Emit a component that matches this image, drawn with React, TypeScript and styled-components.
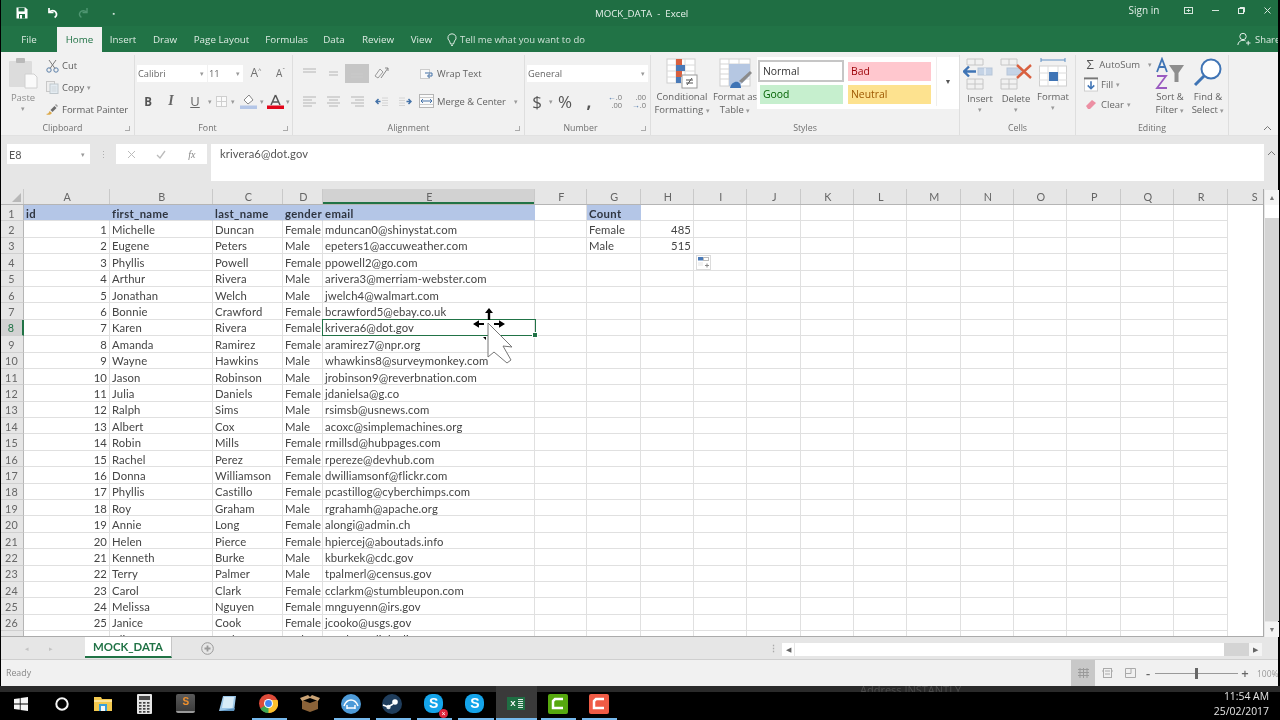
import React from "react";
import styled, { createGlobalStyle } from "styled-components";

const Global = createGlobalStyle`
  html, body { margin: 0; padding: 0; background: #000; }
  #root { width: 1280px; height: 720px; overflow: hidden; }
`;

const UI = `"Open Sans", "Noto Sans", sans-serif`;
const CELL = `Lato, "Open Sans", sans-serif`;

const Page = styled.div`
  width: 1280px; height: 720px; display: flex; flex-direction: column; overflow: hidden;
  background: #000; font-family: ${UI}; filter: blur(0.4px);
`;
const Window = styled.div`
  height: 686px; margin: 0 2px 0 1px; display: flex; flex-direction: column; background: #e6e6e6; position: relative;
`;

/* title bar */
const TitleBar = styled.div`
  height: 26px; background: #1f6e43; display: flex; align-items: center; color: #fff; position: relative; flex: none;
`;
const QuickAccess = styled.div`display: flex; align-items: center; padding-left: 6px;`;
const QuickBtn = styled.div`width: 30.5px; display: flex; justify-content: center;`;
const TitleText = styled.div`
  position: absolute; left: 594px; top: 7px; font-size: 9.7px; line-height: 14px; color: #e8f1ec; white-space: pre;
`;
const WinControls = styled.div`margin-left: auto; margin-right: -3px; display: flex; align-items: center; height: 20px; align-self: flex-start; font-size: 10px; color: #e3eee8;`;
const SignIn = styled.span`margin-right: 16px;`;
const WinBtn = styled.div`width: 26.4px; display: flex; justify-content: center;`;

/* tabs */
const TabRow = styled.div`
  height: 26px; background: #217346; display: flex; align-items: flex-end; flex: none; font-size: 9.8px; color: #dcebe2;
`;
const Tab = styled.div<{ $w: number; $active?: boolean }>`
  width: ${(p) => p.$w}px; height: ${(p) => (p.$active ? 25 : 26)}px; display: flex; align-items: center; justify-content: center;
  padding-top: ${(p) => (p.$active ? 0 : 1)}px; box-sizing: border-box;
  background: ${(p) => (p.$active ? "#f1f1f1" : "transparent")}; color: ${(p) => (p.$active ? "#217346" : "inherit")};
`;
const TellMe = styled.div`display: flex; align-items: center; height: 26px; padding-top: 1px; box-sizing: border-box; gap: 3px; margin-left: 8px; color: #cfe2d7; font-size: 9.5px;`;
const ShareBox = styled.div`margin-left: auto; display: flex; align-items: center; height: 26px; gap: 4px; width: 41px; flex: none; overflow: hidden; white-space: nowrap; font-size: 9.4px;
  svg { flex: none; }
`;

/* ribbon */
const Ribbon = styled.div`height: 83px; background: #f1f1f1; display: flex; flex: none; color: #595959; font-size: 9.5px;`;
const Group = styled.div<{ $w: number }>`
  width: ${(p) => p.$w}px; flex: none; display: flex; flex-direction: column; border-right: 1px solid #dedede; box-sizing: border-box;
  margin-top: 3px;
`;
const GroupBody = styled.div<{ $pl?: number }>`height: 65px; flex: none; display: flex; padding-left: ${(p) => p.$pl ?? 0}px;`;
const GroupColumn = styled.div`height: 65px; flex: none; display: flex; flex-direction: column; padding-top: 9px; box-sizing: border-box;`;
const GroupLabel = styled.div<{ $pr?: number }>`
  height: 12px; flex: none; line-height: 12px; margin-top: 2px; text-align: center; position: relative; color: #707070; font-size: 8.8px;
  padding-right: ${(p) => p.$pr ?? 0}px;
`;
const Launcher = styled.span`
  position: absolute; right: 4px; top: 4px; width: 4px; height: 4px; border-right: 1px solid #aaa; border-bottom: 1px solid #aaa; 
`;
const PasteBtn = styled.div`width: 44px; display: flex; flex-direction: column; align-items: center; padding-top: 2px; color: #8e8e8e;`;
const TinyCaret = styled.span<{ $c?: string }>`font-size: 7px; line-height: 9px; color: ${(p) => p.$c ?? "#999"};`;
const ClipList = styled.div`display: flex; flex-direction: column;`;
const ClipRow = styled.div`height: 22px; display: flex; align-items: center; gap: 3px; white-space: nowrap; color: #5c5c5c;`;
const ClipIcon = styled.div`width: 14px; display: flex; justify-content: center;`;
const ToolRow = styled.div<{ $pl?: number; $mt?: number }>`
  display: flex; align-items: center; height: 18px; padding-left: ${(p) => p.$pl ?? 0}px; margin-top: ${(p) => p.$mt ?? 0}px; white-space: nowrap;
`;
const Slot = styled.div<{ $w: number; $on?: boolean }>`
  width: ${(p) => p.$w}px; height: 19px; flex: none; display: flex; align-items: center; justify-content: center;
  background: ${(p) => (p.$on ? "#c6c6c6" : "transparent")}; color: #707070;
`;
const GrowA = styled.span<{ $s: number }>`font-size: ${(p) => p.$s}px; line-height: 12px;`;
const Mini = styled.span`font-size: 6px; line-height: 6px; align-self: flex-start; margin-top: 3px;`;
const BoldB = styled.span`font-size: 11.5px; font-weight: 700; color: #555;`;
const ItalicI = styled.span`font-family: "Liberation Serif", serif; font-size: 14px; font-weight: 700; font-style: italic; color: #666;`;
const UnderU = styled.span`font-size: 13px; text-decoration: underline; color: #666;`;
const BigSign = styled.span<{ $s?: number; $bold?: boolean }>`font-size: ${(p) => p.$s ?? 17}px; line-height: 19px; font-weight: ${(p) => (p.$bold ? 700 : 400)}; color: #555;`;
const SelectBox = styled.div<{ $w: number }>`
  width: ${(p) => p.$w}px; height: 17px; background: #fff; display: flex; align-items: center; flex: none; box-sizing: border-box;
  font-size: 9.3px; color: #666; padding-right: 3px; margin-right: 1px;
`;
const SelectText = styled.span`flex: 1; padding-left: 1px;`;
const TextTool = styled.div<{ $ml?: number }>`display: flex; align-items: center; gap: 3px; margin-left: ${(p) => p.$ml ?? 0}px; color: #626262; font-size: 9.4px;`;
const LargeBtn = styled.div<{ $w: number }>`
  width: ${(p) => p.$w}px; flex: none; display: flex; flex-direction: column; align-items: center; padding-top: 2px; text-align: center; line-height: 13px; color: #626262; white-space: nowrap;
`;
const LargeIcon = styled.div`height: 33px; display: flex; align-items: center; justify-content: center;`;
const LargeText = styled.div``;
const LowLabel = styled.div`padding-top: 2px; line-height: 13px;`;
const Gallery = styled.div`
  width: 202px; height: 52px; margin-top: 2px; background: #fff; display: grid; grid-template-columns: 88px 88px 1fr; grid-template-rows: 23px 22px; padding: 3px 0 0 1px; box-sizing: border-box; position: relative;
`;
const StyleChip = styled.div<{ $bg: string; $fg: string; $bd?: boolean; $low?: boolean }>`
  background: ${(p) => p.$bg}; color: ${(p) => p.$fg}; display: flex; align-items: center; padding: 0 0 ${(p) => (p.$bd ? 0 : 1)}px 3px;
  margin: ${(p) => (p.$bd ? "0 2px 1px 0" : p.$low ? "2px 3px 1px 2px" : "2px 3px 2px 2px")};
  border: ${(p) => (p.$bd ? "2px solid #c6c6c6" : "none")};
  font-size: 10.4px; box-sizing: border-box;
`;
const GalleryScroll = styled.div`
  grid-row: 1 / span 2; grid-column: 3; border-left: 1px solid #eee; display: flex; align-items: center; justify-content: center; margin: -3px 0 -1px 2px; font-size: 7px; color: #555; 
`;
const EditList = styled.div`width: 68px; margin-top: -1px; padding-left: 8px; box-sizing: content-box; display: flex; flex-direction: column; flex: none;`;
const EditRow = styled.div`height: 20px; display: flex; align-items: center; gap: 3px; white-space: nowrap; color: #666;`;
const EditIcon = styled.div`width: 14px; display: flex; justify-content: center;`;
const SigmaGlyph = styled.span`font-size: 13px; color: #555;`;
const CollapseArea = styled.div`flex: 1; display: flex; align-items: flex-end; justify-content: flex-end; padding: 0 6px 4px 0;`;

/* formula bar */
const FormulaBar = styled.div`
  height: 54px; flex: none; display: flex; align-items: flex-start; padding-top: 8px; box-sizing: border-box; background: #e6e6e6; color: #666;
  border-top: 1px solid #e1e1e1;
`;
const NameBox = styled.div`
  width: 83px; height: 20px; margin-left: 6px; background: #fff; display: flex; align-items: center; justify-content: space-between; padding: 0 5px 0 2px; box-sizing: border-box; font-family: ${CELL}; font-size: 10.8px; color: #555;
`;
const Grip = styled.div`width: 26px; display: flex; justify-content: center; align-items: center; height: 20px; color: #aaa; font-size: 9px;`;
const FxBox = styled.div`width: 91px; height: 20px; background: #fff; display: flex; align-items: center;`;
const FxBtn = styled.div`flex: 1; display: flex; justify-content: center; align-items: center; color: #888; font-family: "Liberation Serif", serif; font-style: italic; font-size: 10px;`;
const FormulaInput = styled.div`
  width: 1053px; height: 37px; margin-left: 4px; background: #fff; box-sizing: border-box; padding: 2px 0 0 9px; font-family: ${CELL}; font-size: 11.2px; letter-spacing: .12px; line-height: 15px; color: #555;
`;
const FormulaEnd = styled.div`flex: 1; display: flex; justify-content: center; padding-top: 6px;`;

/* sheet */
const COLS = [23, 86, 103, 70, 40, 212, 52, 54, 53, 53, 54, 53, 53, 54, 53, 53, 54, 53, 54, 53];
const TEMPLATE = COLS.map((c) => `${c}px`).join(" ");
const Sheet = styled.div`height: 448px; flex: none; display: flex; position: relative; background: #e6e6e6;`;
const GridArea = styled.div`width: 1263px; flex: none; display: flex; flex-direction: column; overflow: hidden; background: #fff; border-right: 1px solid #ababab; border-bottom: 1px solid #ababab; box-sizing: border-box;`;
const HeaderRow = styled.div`
  height: 16px; flex: none; display: grid; grid-template-columns: ${TEMPLATE}; background: #e6e6e6; box-sizing: border-box; border-bottom: 1px solid #b5b5b5;
`;
const Corner = styled.div`position: relative; border-right: 1px solid #c9c9c9;`;
const CornerMark = styled.span`
  position: absolute; right: 2px; bottom: 2px; width: 0; height: 0; border-left: 9px solid transparent; border-bottom: 9px solid #b8b8b8;
`;
const ColHead = styled.div<{ $sel?: boolean }>`
  display: flex; align-items: center; justify-content: center; font-family: ${CELL}; font-size: 10.8px; color: #666;
  border-right: 1px solid #c9c9c9; box-sizing: border-box; padding-left: 1.5px;
  background: ${(p) => (p.$sel ? "#d2d2d2" : "transparent")};
  box-shadow: ${(p) => (p.$sel ? "inset 0 -2px 0 #217346" : "none")};
`;
const Row = styled.div`
  height: 16.4px; flex: none; display: grid; grid-template-columns: ${TEMPLATE};
  font-family: ${CELL}; font-size: 11.3px; letter-spacing: .12px; color: #444;
`;
const RowHead = styled.div<{ $sel?: boolean }>`
  background: ${(p) => (p.$sel ? "#d2d2d2" : "#e6e6e6")}; color: ${(p) => (p.$sel ? "#217346" : "#666")}; display: flex; align-items: center; justify-content: center;
  padding: 1px 1px 0 0; box-sizing: border-box; border-bottom: 1px solid #cfcfcf; 
  border-right: ${(p) => (p.$sel ? "2px solid #217346" : "1px solid #b5b5b5")};
  font-size: 10.8px;
`;
const Cell = styled.div<{ $right?: boolean; $fill?: boolean; $bold?: boolean; $noBorder?: boolean }>`
  position: relative; display: flex; align-items: center; box-sizing: border-box; padding: 1px 2px 0; white-space: nowrap; min-width: 0;
  justify-content: ${(p) => (p.$right ? "flex-end" : "flex-start")};
  border-right: 1px solid ${(p) => (p.$noBorder ? (p.$fill ? "#b4c6e7" : "transparent") : "#e0e0e0")};
  border-bottom: 1px solid #e0e0e0;
  background: ${(p) => (p.$fill ? "#b4c6e7" : "transparent")};
  font-weight: ${(p) => (p.$bold ? 700 : 400)};
  letter-spacing: ${(p) => (p.$bold ? ".35px" : "inherit")};
  color: ${(p) => (p.$bold ? "#2f3540" : "inherit")};
`;
const Selection = styled.span`
  position: absolute; left: -1px; top: -1px; right: -2px; bottom: -1px; border: 1.5px solid #217346; pointer-events: none; z-index: 2;
`;
const FillHandle = styled.span`
  position: absolute; right: -3px; bottom: -3px; width: 4px; height: 4px; background: #217346; border: 1px solid #fff; z-index: 3;
`;
const QuickAnalysis = styled.div`
  position: absolute; left: 695px; top: 66px; width: 15px; height: 15px; background: #fff; border: 1px solid #dcdcdc; box-sizing: border-box; display: flex; align-items: center; justify-content: center;
`;
const Pointer = styled.div`position: absolute; left: 468px; top: 117px; z-index: 5;`;
const ScrollRail = styled.div`width: 14px; margin-left: 1px; display: flex; flex-direction: column; flex: none;`;
const ScrollBtn = styled.div`height: 15px; background: #f4f4f4; flex: none; display: flex; align-items: center; justify-content: center; margin-top: 1px;`;
const ScrollThumb = styled.div`height: 13px; background: #fff; flex: none;`;
const ScrollTrack = styled.div`flex: 1; background: #d4d4d4;`;

/* sheet tabs */
const SheetBar = styled.div`
  height: 23px; flex: none; background: #e6e6e6; display: flex; align-items: flex-start; box-sizing: border-box; border-bottom: 1px solid #cfcfcf; color: #aaa;
`;
const NavArrows = styled.div`width: 84px; height: 22px; display: flex; align-items: center; padding-left: 14px; box-sizing: border-box; font-size: 7px; color: #c3c3c3;`;
const NavArrow = styled.span`width: 24px; text-align: center;`;
const SheetTab = styled.div`
  width: 87px; height: 21px; background: #fff; border-bottom: 2px solid #217346; box-sizing: border-box; display: flex; align-items: center; justify-content: center; color: #217346; font-family: ${CELL}; font-weight: 700; font-size: 11.4px;
  border-right: 1px solid #c6c6c6;
`;
const PlusBtn = styled.div`margin-left: 29px; height: 22px; display: flex; align-items: center;`;
const BarGrip = styled.div`margin-left: 555px; width: 13px; height: 22px; display: flex; align-items: center; color: #aaa; font-size: 9px; font-weight: 700;`;
const HScroll = styled.div`display: flex; align-items: center; height: 14px; margin-top: 5px; width: 480px; flex: none;`;
const HBtn = styled.div<{ $w?: number; $soft?: boolean }>`width: ${(p) => p.$w ?? 12}px; height: 13px; background: ${(p) => (p.$soft ? "#f4f4f4" : "#fff")}; display: flex; align-items: center; justify-content: center; flex: none;`;
const HTrack = styled.div`flex: 1; height: 13px; background: #fff; margin-left: 1px;`;
const HThumb = styled.div`width: 25px; height: 13px; background: #d4d4d4; flex: none;`;

/* status */
const StatusBar = styled.div`
  height: 26px; flex: none; background: #f1f1f1; display: flex; align-items: center; padding-left: 5px; font-size: 8.8px; color: #888;
`;
const StatusRight = styled.div`margin-left: auto; height: 26px; display: flex; align-items: center; white-space: nowrap;`;
const ViewBtn = styled.div<{ $on?: boolean; $w: number }>`
  width: ${(p) => p.$w}px; height: 26px; display: flex; align-items: center; justify-content: center; background: ${(p) => (p.$on ? "#c8c8c8" : "transparent")};
`;
const ZoomTrack = styled.div`width: 83px; height: 1px; background: #999; position: relative;`;
const ZoomThumb = styled.span`position: absolute; left: 40px; top: -5px; width: 3px; height: 11px; background: #666;`;
const ZoomSign = styled.span`width: 14px; text-align: center; color: #666; font-size: 13px; font-weight: 600; line-height: 12px;`;
const ZoomPct = styled.span`width: 21px; margin-left: 5px; color: #999; font-size: 8.5px; overflow: hidden;`;

/* taskbar */
const Taskbar = styled.div`height: 34px; flex: none; background: #000; display: flex; position: relative; color: #e8e8e8;`;
const TaskStrip = styled.div`
  position: absolute; left: 0; right: 0; top: 0; height: 6px; background: #2a2a2a; overflow: hidden; font-size: 11px; line-height: 8px; color: #4d4d4d; padding-left: 860px; white-space: pre;
`;
const TaskItem = styled.div<{ $open?: boolean; $active?: boolean }>`
  width: 41.3px; height: 34px; flex: none; display: flex; align-items: center; justify-content: center; position: relative; padding-top: 1px; box-sizing: border-box;
  background: ${(p) => (p.$active ? "#3a3a3a" : "transparent")}; z-index: 1;
  &::after {
    content: ""; position: absolute; left: ${(p) => (p.$active ? 0 : 4)}px; right: ${(p) => (p.$active ? 0 : 2)}px; bottom: 0; height: 2px;
    background: ${(p) => (p.$open ? "#76b9ed" : "transparent")};
  }
`;
const Clock = styled.div`
  margin-left: auto; padding: 3px 11px 0 0; text-align: right; font-size: 10.4px; line-height: 15px; z-index: 1; color: #e4e4e4;
`;

/* ---------- icons ---------- */
const Caret = () => <TinyCaret>▾</TinyCaret>;

const SaveIcon = () => (
  <svg width="12" height="12" viewBox="0 0 12 12"><path d="M0.5 0.5h9l2 2v9h-11z" fill="#fff" /><rect x="2.5" y="1" width="6" height="3.4" fill="#1f6e43" /><rect x="3" y="7" width="6" height="4.5" fill="#1f6e43" /><rect x="4" y="8" width="2" height="3.5" fill="#fff" /></svg>
);
const UndoIcon = ({ c = "#fff" }: { c?: string }) => (
  <svg width="13" height="12" viewBox="0 0 13 12" fill="none" stroke={c} strokeWidth="1.7"><path d="M3 1v4.5h4.5" /><path d="M3.2 5.2c2-2 5.2-2 6.6 0 1.2 1.8.6 4-1.2 5.3" /></svg>
);
const RedoIcon = () => (
  <svg width="13" height="12" viewBox="0 0 13 12" fill="none" stroke="#4f9672" strokeWidth="1.4"><path d="M10 1v4.5H5.5" /><path d="M9.8 5.2c-2-2-5.2-2-6.6 0-1.2 1.8-.6 4 1.2 5.3" /></svg>
);
const BoxIcon = () => <svg width="9" height="7" viewBox="0 0 9 7" fill="none" stroke="#d5e6dc"><rect x=".5" y=".5" width="8" height="6" /><path d="M2.500 3.500h4M4.500 2v3" /></svg>;
const MinIcon = () => <svg width="7" height="7" viewBox="0 0 7 7" stroke="#d5e6dc"><path d="M0 3.500h7" /></svg>;
const RestoreIcon = () => <svg width="7" height="7" viewBox="0 0 7 7" fill="none" stroke="#e3eee8"><rect x=".5" y="1.500" width="5" height="5" /><path d="M2 1.500V.5h4.500V5h-1" /></svg>;
const CloseIcon = () => <svg width="7" height="7" viewBox="0 0 7 7" stroke="#d5e6dc"><path d="M.5.5l6 6M6.500.5l-6 6" /></svg>;
const Bulb = () => <svg width="10" height="13" viewBox="0 0 10 13" fill="none" stroke="#dcebe2"><path d="M5 .8a4 4 0 0 0-2.500 7.200L3.500 11h3l1-3A4 4 0 0 0 5 .8z" /><path d="M4 12.400h2" /></svg>;
const ShareIcon = () => <svg width="14" height="14" viewBox="0 0 14 14" fill="none" stroke="#e4efe9"><circle cx="6" cy="4.500" r="3.200" /><path d="M.8 13c.4-3 2.500-4.700 5.200-4.700 1 0 1.800.2 2.500.6M9 11h4.500M11.200 8.800v4.500" /></svg>;

const ClipboardIcon = () => (
  <svg width="30" height="34" viewBox="0 0 30 34"><rect x="1" y="4" width="23" height="26" rx="1" fill="#dcdcdc" /><rect x="8" y="1" width="9" height="5" rx="1" fill="#b9b9b9" /><path d="M17 17h9l3 3v11H17z" fill="#fafafa" stroke="#d0d0d0" /></svg>
);
const Scissors = () => <svg width="13" height="14" viewBox="0 0 13 14" fill="none" stroke="#7a7a7a"><circle cx="3" cy="11" r="2.200" stroke="#5b7fa8" /><circle cx="10" cy="11" r="2.200" stroke="#5b7fa8" /><path d="M3 1l6 8.500M10 1L4 9.500" /></svg>;
const CopyIcon = () => <svg width="13" height="13" viewBox="0 0 13 13"><rect x=".5" y=".5" width="8" height="10" fill="#eee" stroke="#c8c8c8" /><rect x="4" y="3" width="8" height="9.500" fill="#e4ecf2" stroke="#bfc7cc" /><path d="M5.500 6h5M5.500 8h5M5.500 10h5" stroke="#cfd5d9" /></svg>;
const Brush = () => <svg width="14" height="13" viewBox="0 0 14 13"><path d="M1 11c2 0 3-1 3.500-3L7 10c-1.500 2-4 2.500-6 1z" fill="#dca94a" /><path d="M5.500 7l4-4 2 2-4 4z" fill="#6b6b6b" /><path d="M10 2l1-1 2 2-1 1z" fill="#999" /></svg>;

const Lines = ({ rows, w = 13 }: { rows: number[][]; w?: number }) => (
  <svg width={w} height="12" viewBox={`0 0 ${w} 12`} stroke="#c8c8c8" strokeWidth="1.500">
    {rows.map((r, i) => <line key={i} x1={r[0]} x2={r[1]} y1={r[2]} y2={r[2]} />)}
  </svg>
);
const Orient = () => <svg width="17" height="14" viewBox="0 0 17 14" fill="none" stroke="#9a9a9a"><path d="M2 10l5-7 3 3-5 6z" /><path d="M8 12L15 2M12 2h3v3" stroke="#888" /></svg>;
const IndentIcon = ({ flip }: { flip?: boolean }) => (
  <svg width="13" height="11" viewBox="0 0 13 11" style={flip ? { transform: "scaleX(-1)" } : undefined}>
    <path d="M7 2h6M7 4.500h6M7 7h6M7 9.500h6" stroke="#d4d4d4" /><path d="M5.500 5.500H1M3.500 3L1 5.500 3.500 8" fill="none" stroke="#4472a8" strokeWidth="1.500" />
  </svg>
);
const WrapIcon = () => <svg width="14" height="11" viewBox="0 0 14 11"><rect x=".5" y="1.500" width="9" height="9" fill="#fafafa" stroke="#ccc" /><path d="M5 5h7v3H8M9.500 6l-2 2 2 2" fill="none" stroke="#4472a8" /></svg>;
const MergeIcon = () => <svg width="15" height="14" viewBox="0 0 15 14" fill="none"><rect x=".5" y=".5" width="14" height="13" fill="#fafafa" stroke="#b5b5b5" /><path d="M1 3.500h13M1 10.500h13" stroke="#ccc" /><path d="M2 7h11M4 5L2 7l2 2M11 5l2 2-2 2" stroke="#4472a8" /></svg>;
const Stack = styled.div`display: flex; flex-direction: column; align-items: flex-end; font-size: 7.5px; line-height: 8px; color: #777;`;
const StackLine = styled.span`display: flex; align-items: center; height: 8px;`;
const ArrowL = styled.span`color: #4472a8; font-weight: 700; font-size: 8px;`;
const IncDec = ({ inc }: { inc?: boolean }) => (
  <Stack>
    <StackLine>{inc ? <ArrowL>←</ArrowL> : null}{inc ? ".0" : ".00"}</StackLine>
    <StackLine>{inc ? ".00" : <><ArrowL>→</ArrowL>.0</>}</StackLine>
  </Stack>
);

const FillBucket = () => <svg width="17" height="15" viewBox="0 0 17 15"><path d="M4 6l5-5 4 5-5 4z" fill="#fff" stroke="#888" /><rect x="0" y="11.500" width="17" height="3.500" fill="#b4c6e7" /></svg>;
const ColorA = () => <svg width="17" height="15" viewBox="0 0 17 15"><path d="M8.500 1L4 11M8.500 1L13 11M5.500 8h6" stroke="#555" strokeWidth="1.500" fill="none" /><rect x="0" y="11.500" width="17" height="3.500" fill="#e2061a" /></svg>;
const BorderIcon = () => <svg width="11" height="11" viewBox="0 0 11 11" fill="#fafafa" stroke="#cfcfcf"><rect x=".5" y=".5" width="10" height="10" /><path d="M5.500 0v11M0 5.500h11" /></svg>;
const CondFormat = () => (
  <svg width="32" height="31" viewBox="0 0 32 31">
    <rect x="1" y="1" width="28" height="24" fill="#fff" stroke="#cfcfcf" />
    <path d="M1 7h28M1 13h28M1 19h28M10 1v24M19 1v24" stroke="#dadada" fill="none" />
    <rect x="10" y="1" width="6" height="6" fill="#d9603f" /><rect x="10" y="7" width="9" height="6" fill="#4a7ab8" /><rect x="10" y="13" width="6" height="6" fill="#d9603f" /><rect x="10" y="19" width="5" height="6" fill="#4a7ab8" />
    <rect x="16" y="17" width="15" height="13" fill="#fff" stroke="#9a9a9a" />
    <path d="M20 22h7M20 25h7M26 20l-5 7" stroke="#555" fill="none" />
  </svg>
);
const TableFormat = () => (
  <svg width="33" height="31" viewBox="0 0 33 31">
    <rect x="1" y="1" width="30" height="27" fill="#fff" stroke="#d0d0d0" />
    <path d="M1 6h30M1 11h30M1 16h30M1 21h30M10 1v27M20 1v27" stroke="#d5d5d5" fill="none" />
    <path d="M10 6h21v12L20 28H10z" fill="#b5c7e2" />
    <path d="M20 23l11-10 2 2-10 10z" fill="#8b8b8b" /><path d="M11 30c1-5 5-7 8-6 2 1 3 3 3 6z" fill="#3f74b5" />
  </svg>
);
const InsertIcon = () => (
  <svg width="34" height="32" viewBox="0 0 34 32" fill="none">
    <path d="M4 1h16v6H4zM12 1v6M4 21h16v10H4zM4 26h16M12 21v10" stroke="#c6c6c6" />
    <rect x="15" y="10" width="14" height="7" fill="#c4d3e6" stroke="#b7c6d8" /><path d="M22 10v7" stroke="#fff" />
    <path d="M13 13.500H1M6 8.500l-5 5 5 5" stroke="#3f74b5" strokeWidth="2.400" />
  </svg>
);
const DeleteIcon = () => (
  <svg width="34" height="32" viewBox="0 0 34 32" fill="none">
    <path d="M2 1h16v6H2zM10 1v6M2 21h16v10H2zM2 26h16M10 21v10" stroke="#c6c6c6" />
    <rect x="8" y="10" width="14" height="7" fill="#c4d3e6" stroke="#b7c6d8" />
    <path d="M18 7l14 13M32 7L18 20" stroke="#d9603f" strokeWidth="2.400" />
  </svg>
);
const FormatIcon = () => (
  <svg width="30" height="33" viewBox="0 0 30 33" fill="none">
    <path d="M3 3h24M3 1v4M27 1v4" stroke="#5e90c4" />
    <rect x="1.500" y="9" width="27" height="20" fill="#fff" stroke="#cfcfcf" />
    <path d="M10 9v20M20 9v20M1 16h28M1 23h28" stroke="#dcdcdc" />
    <rect x="11" y="15" width="9" height="9" fill="#3f74b5" />
  </svg>
);
const FillDown = () => <svg width="15" height="15" viewBox="0 0 15 15" fill="none"><rect x=".5" y=".5" width="14" height="14" fill="#fff" stroke="#ccc" /><rect x="0" y="0" width="15" height="2" fill="#777" /><path d="M7.500 4v8M4 8.500l3.500 3.500L11 8.500" stroke="#3f74b5" strokeWidth="1.700" /></svg>;
const Eraser = () => <svg width="12" height="11" viewBox="0 0 12 11"><path d="M1 7l6-6 4 3-6 6H3z" fill="#ec8fa3" /></svg>;
const SortFilter = () => (
  <svg width="30" height="33" viewBox="0 0 30 33" fill="none">
    <path d="M2 15L7 2l5 13M4 10h6" stroke="#3f74b5" strokeWidth="1.800" />
    <path d="M2 19h9L2 31h10" stroke="#9a5bc0" strokeWidth="1.800" />
    <path d="M14 8h15l-5.500 8v9h-4v-9z" fill="#8e8e8e" />
  </svg>
);
const Magnifier = () => (
  <svg width="30" height="33" viewBox="0 0 30 33" fill="none">
    <circle cx="18" cy="12" r="9.500" stroke="#3f74b5" strokeWidth="2" fill="#fff" />
    <path d="M11 19L2 28" stroke="#3f74b5" strokeWidth="3" />
  </svg>
);
const Chevron = () => <svg width="9" height="6" viewBox="0 0 9 6" fill="none" stroke="#777"><path d="M1 5l3.500-3.500L8 5" /></svg>;
const XIcon = () => <svg width="9" height="9" viewBox="0 0 9 9" stroke="#bbb"><path d="M1 1l7 7M8 1L1 8" /></svg>;
const Check = () => <svg width="10" height="9" viewBox="0 0 10 9" fill="none" stroke="#bbb" strokeWidth="1.300"><path d="M1 5l3 3 5-7" /></svg>;

const Cursor = () => (
  <svg width="46" height="60" viewBox="0 0 46 60">
    <path d="M20 2l-4 5h2.800v7h2.400V7H24zM4 18l6-3.800V17h5v2h-5v2.800zM36 18l-6-3.800V17h-5v2h5v2.800zM17 31l-3 0 3 3z" fill="#000" />
    <path d="M19 17v34l6-5 13 11 4-3-8-14 9 1z" fill="#fff" stroke="#777" strokeWidth="1" />
  </svg>
);
const QAIcon = () => <svg width="11" height="11" viewBox="0 0 11 11"><rect x="0" y="0" width="5" height="3.500" fill="#4a7ab8" /><rect x="5.500" y=".5" width="5" height="3" fill="#fff" stroke="#bbb" /><rect x="0" y="5" width="5" height="4" fill="#f1f1f1" /><path d="M7 8.500h4M9 6.500v4" stroke="#888" /></svg>;

const WinLogo = () => <svg width="14" height="14" viewBox="0 0 14 14" fill="#f5f5f5"><path d="M0 2l5.800-.8v5.400H0zM6.600 1.100L14 0v6.600H6.600zM0 7.400h5.800v5.400L0 12zM6.600 7.400H14V14l-7.400-1z" /></svg>;
const Cortana = () => <svg width="14" height="14" viewBox="0 0 14 14" fill="none" stroke="#f4f4f4" strokeWidth="2"><circle cx="7" cy="7" r="5.700" /></svg>;
const Explorer = () => <svg width="18" height="15" viewBox="0 0 18 15"><path d="M0 1h7l1 2h10v12H0z" fill="#f3c94f" /><rect x="0" y="4" width="18" height="2" fill="#fbe39a" /><rect x="5" y="8" width="8" height="7" fill="#3aa0d8" /><rect x="7" y="10" width="4" height="5" fill="#f6f6f6" /></svg>;
const Calc = () => (
  <svg width="15" height="20" viewBox="0 0 15 20"><rect width="15" height="20" rx="1" fill="#e5e5e5" /><rect x="2" y="2" width="11" height="4" fill="#4b4b4b" />
    {[8, 11, 14, 17].map((y) => [2, 6, 10].map((x) => <rect key={`${x}-${y}`} x={x} y={y} width="2.500" height="1.700" fill="#444" />))}
  </svg>
);
const Sublime = styled.div`
  width: 19px; height: 17px; border-radius: 2px; background: linear-gradient(#5a5a5a, #3c3c3c); border-bottom: 2px solid #999; color: #f0902c; font-weight: 700; font-size: 10px; line-height: 16px; text-align: center; font-family: "Liberation Sans", sans-serif;
`;
const Paper = () => <svg width="17" height="18" viewBox="0 0 17 18"><path d="M4 1h13l-2 15H0z" fill="#9cc7e8" /><path d="M5 2h10l-1.500 11H3z" fill="#d7ecf8" /><path d="M0 16h15l1-3z" fill="#5d93bf" /></svg>;
const Chrome = () => (
  <svg width="19" height="19" viewBox="0 0 19 19"><circle cx="9.500" cy="9.500" r="9.500" fill="#dd4b39" /><path d="M9.500 9.500L1.300 14.500A9.500 9.500 0 0 0 9.500 19L14 10z" fill="#3da954" /><path d="M9.500 9.500L9.500 19A9.500 9.500 0 0 0 18.500 6H9.500z" fill="#fbc02d" /><circle cx="9.500" cy="9.500" r="4.500" fill="#fff" /><circle cx="9.500" cy="9.500" r="3.400" fill="#4285f4" /></svg>
);
const BoxApp = () => <svg width="20" height="17" viewBox="0 0 20 17"><path d="M2 5l8 3 8-3v9l-8 3-8-3z" fill="#8a6238" /><path d="M0 3l8-3 2 2 2-2 8 3-2 3-8-3-8 3z" fill="#c9a274" /></svg>;
const BlueApp = () => <svg width="20" height="20" viewBox="0 0 20 20"><circle cx="10" cy="10" r="10" fill="#4e9bd8" /><path d="M3 12c3-8 11-8 14 0M6 11v4M14 11v4M6 14h8" stroke="#fff" strokeWidth="1.500" fill="none" /></svg>;
const Steam = () => <svg width="20" height="20" viewBox="0 0 20 20"><circle cx="10" cy="10" r="10" fill="#1f3d5c" /><circle cx="13" cy="8" r="2.800" fill="#fff" /><circle cx="6.500" cy="13" r="2.200" fill="#dfe6ec" /><path d="M1 11l5 2 5-3" stroke="#fff" strokeWidth="1.500" fill="none" /></svg>;
const SkypeMark = styled.div`
  width: 19px; height: 19px; border-radius: 8px; background: #14a4ea; color: #fff; font-weight: 700; font-size: 14px; line-height: 19px; text-align: center; font-family: "Liberation Sans", sans-serif; position: relative;
`;
const SkypeBadge = styled.span`
  position: absolute; right: -5px; bottom: -5px; width: 9px; height: 9px; border-radius: 50%; background: #e0253c; color: #fff; font-size: 7px; line-height: 9px; font-weight: 400;
`;
const ExcelMark = styled.div`
  width: 18px; height: 13px; background: #1f6e43; color: #fff; font-size: 8px; line-height: 13px; font-weight: 700; font-family: "Liberation Sans", sans-serif; padding-left: 3px; box-sizing: border-box; position: relative;
`;
const ExcelLines = styled.span`
  position: absolute; right: 2px; top: 2px; width: 5px; height: 9px; background: repeating-linear-gradient(#dde9e2 0 1px, #1f6e43 1px 2px);
`;
const Camtasia = ({ c }: { c: string }) => (
  <svg width="20" height="20" viewBox="0 0 20 20"><rect width="20" height="20" rx="2" fill={c} /><path d="M15 5H7L5 7v7h10" fill="none" stroke="#fff" strokeWidth="2.500" /></svg>
);

/* ---------- data ---------- */
const DATA: [string, string, string, string][] = [
  ["Michelle", "Duncan", "Female", "mduncan0@shinystat.com"],
  ["Eugene", "Peters", "Male", "epeters1@accuweather.com"],
  ["Phyllis", "Powell", "Female", "ppowell2@go.com"],
  ["Arthur", "Rivera", "Male", "arivera3@merriam-webster.com"],
  ["Jonathan", "Welch", "Male", "jwelch4@walmart.com"],
  ["Bonnie", "Crawford", "Female", "bcrawford5@ebay.co.uk"],
  ["Karen", "Rivera", "Female", "krivera6@dot.gov"],
  ["Amanda", "Ramirez", "Female", "aramirez7@npr.org"],
  ["Wayne", "Hawkins", "Male", "whawkins8@surveymonkey.com"],
  ["Jason", "Robinson", "Male", "jrobinson9@reverbnation.com"],
  ["Julia", "Daniels", "Female", "jdanielsa@g.co"],
  ["Ralph", "Sims", "Male", "rsimsb@usnews.com"],
  ["Albert", "Cox", "Male", "acoxc@simplemachines.org"],
  ["Robin", "Mills", "Female", "rmillsd@hubpages.com"],
  ["Rachel", "Perez", "Female", "rpereze@devhub.com"],
  ["Donna", "Williamson", "Female", "dwilliamsonf@flickr.com"],
  ["Phyllis", "Castillo", "Female", "pcastillog@cyberchimps.com"],
  ["Roy", "Graham", "Male", "rgrahamh@apache.org"],
  ["Annie", "Long", "Female", "alongi@admin.ch"],
  ["Helen", "Pierce", "Female", "hpiercej@aboutads.info"],
  ["Kenneth", "Burke", "Male", "kburkek@cdc.gov"],
  ["Terry", "Palmer", "Male", "tpalmerl@census.gov"],
  ["Carol", "Clark", "Female", "cclarkm@stumbleupon.com"],
  ["Melissa", "Nguyen", "Female", "mnguyenn@irs.gov"],
  ["Janice", "Cook", "Female", "jcooko@usgs.gov"],
  ["Alice", "Taylor", "Male", "ataylorp@linkedin.com"],
];
const LETTERS = "ABCDEFGHIJKLMNOPQRS".split("");
const EMPTY = Array.from({ length: 11 }, (_, i) => i);
const SUMMARY: Record<number, [string, string]> = { 2: ["Female", "485"], 3: ["Male", "515"] };

const Tabs: [string, number][] = [["File", 56], ["Home", 45], ["Insert", 42], ["Draw", 42], ["Page Layout", 71], ["Formulas", 59], ["Data", 36], ["Review", 52], ["View", 35]];

export default function App() {
  return (
    <Page>
      <Global />
      <Window>
        <TitleBar>
          <QuickAccess>
            <QuickBtn><SaveIcon /></QuickBtn>
            <QuickBtn><UndoIcon /></QuickBtn>
            <QuickBtn><RedoIcon /></QuickBtn>
            <QuickBtn><TinyCaret $c="#cfe2d7">▪</TinyCaret></QuickBtn>
          </QuickAccess>
          <TitleText>MOCK_DATA  -  Excel</TitleText>
          <WinControls>
            <SignIn>Sign in</SignIn>
            <WinBtn><BoxIcon /></WinBtn>
            <WinBtn><MinIcon /></WinBtn>
            <WinBtn><RestoreIcon /></WinBtn>
            <WinBtn><CloseIcon /></WinBtn>
          </WinControls>
        </TitleBar>

        <TabRow>
          {Tabs.map(([t, w]) => <Tab key={t} $w={w} $active={t === "Home"}>{t}</Tab>)}
          <TellMe><Bulb />Tell me what you want to do</TellMe>
          <ShareBox><ShareIcon />Share</ShareBox>
        </TabRow>

        <Ribbon>
          <Group $w={134}>
            <GroupBody>
              <PasteBtn><ClipboardIcon /><span>Paste</span><Caret /></PasteBtn>
              <ClipList>
                <ClipRow><ClipIcon><Scissors /></ClipIcon>Cut</ClipRow>
                <ClipRow><ClipIcon><CopyIcon /></ClipIcon>Copy <Caret /></ClipRow>
                <ClipRow><ClipIcon><Brush /></ClipIcon>Format Painter</ClipRow>
              </ClipList>
            </GroupBody>
            <GroupLabel $pr={10}>Clipboard<Launcher /></GroupLabel>
          </Group>

          <Group $w={158}>
            <GroupColumn>
              <ToolRow $pl={2}>
                <SelectBox $w={70}><SelectText>Calibri</SelectText><Caret /></SelectBox>
                <SelectBox $w={35}><SelectText>11</SelectText><Caret /></SelectBox>
                <Slot $w={24}><GrowA $s={12}>A</GrowA><Mini>^</Mini></Slot>
                <Slot $w={25}><GrowA $s={10}>A</GrowA><Mini>ˇ</Mini></Slot>
              </ToolRow>
              <ToolRow $pl={2} $mt={10}>
                <Slot $w={22}><BoldB>B</BoldB></Slot>
                <Slot $w={24}><ItalicI>I</ItalicI></Slot>
                <Slot $w={24}><UnderU>U</UnderU></Slot>
                <Slot $w={6}><Caret /></Slot>
                <Slot $w={16}><BorderIcon /></Slot>
                <Slot $w={8}><Caret /></Slot>
                <Slot $w={22}><FillBucket /></Slot>
                <Slot $w={6}><Caret /></Slot>
                <Slot $w={20}><ColorA /></Slot>
                <Slot $w={5}><Caret /></Slot>
              </ToolRow>
            </GroupColumn>
            <GroupLabel $pr={12}>Font<Launcher /></GroupLabel>
          </Group>

          <Group $w={232}>
            <GroupColumn>
              <ToolRow $pl={4}>
                <Slot $w={24}><Lines rows={[[0, 13, 2], [0, 13, 5]]} /></Slot>
                <Slot $w={24}><Lines rows={[[2, 11, 5], [2, 11, 8]]} /></Slot>
                <Slot $w={24} $on><Lines rows={[[2, 14, 10], [2, 14, 7]]} w={16} /></Slot>
                <Slot $w={24}><Orient /></Slot>
                <TextTool $ml={27}><WrapIcon />Wrap Text</TextTool>
              </ToolRow>
              <ToolRow $pl={4} $mt={10}>
                <Slot $w={24}><Lines rows={[[0, 13, 2], [0, 9, 5], [0, 13, 8], [0, 9, 11]]} /></Slot>
                <Slot $w={24}><Lines rows={[[0, 13, 2], [2, 11, 5], [0, 13, 8], [2, 11, 11]]} /></Slot>
                <Slot $w={24}><Lines rows={[[0, 13, 2], [4, 13, 5], [0, 13, 8], [4, 13, 11]]} /></Slot>
                <Slot $w={24}><IndentIcon /></Slot>
                <Slot $w={24}><IndentIcon flip /></Slot>
                <TextTool $ml={2}><MergeIcon />Merge &amp; Center&nbsp;&nbsp;<Caret /></TextTool>
              </ToolRow>
            </GroupColumn>
            <GroupLabel>Alignment<Launcher /></GroupLabel>
          </Group>

          <Group $w={126}>
            <GroupColumn>
              <ToolRow $pl={2}>
                <SelectBox $w={121}><SelectText>General</SelectText><Caret /></SelectBox>
              </ToolRow>
              <ToolRow $pl={2} $mt={10}>
                <Slot $w={20}><BigSign>$</BigSign></Slot>
                <Slot $w={8}><Caret /></Slot>
                <Slot $w={20}><BigSign>%</BigSign></Slot>
                <Slot $w={28}><BigSign $bold>,</BigSign></Slot>
                <Slot $w={24}><IncDec inc /></Slot>
                <Slot $w={24}><IncDec /></Slot>
              </ToolRow>
            </GroupColumn>
            <GroupLabel $pr={14}>Number<Launcher /></GroupLabel>
          </Group>

          <Group $w={309}>
            <GroupBody>
              <LargeBtn $w={62}><LargeIcon><CondFormat /></LargeIcon><LargeText>Conditional<br />Formatting <Caret /></LargeText></LargeBtn>
              <LargeBtn $w={44}><LargeIcon><TableFormat /></LargeIcon><LargeText>Format as<br />Table <Caret /></LargeText></LargeBtn>
              <Gallery>
                <StyleChip $bd $bg="#fff" $fg="#333">Normal</StyleChip>
                <StyleChip $bg="#ffc7ce" $fg="#9c0006">Bad</StyleChip>
                <GalleryScroll>▼</GalleryScroll>
                <StyleChip $low $bg="#c6efce" $fg="#006100">Good</StyleChip>
                <StyleChip $low $bg="#fde28f" $fg="#9c5700">Neutral</StyleChip>
              </Gallery>
            </GroupBody>
            <GroupLabel>Styles</GroupLabel>
          </Group>

          <Group $w={116}>
            <GroupBody $pl={2}>
              <LargeBtn $w={36}><LargeIcon><InsertIcon /></LargeIcon><LowLabel>Insert</LowLabel><Caret /></LargeBtn>
              <LargeBtn $w={36}><LargeIcon><DeleteIcon /></LargeIcon><LowLabel>Delete</LowLabel><Caret /></LargeBtn>
              <LargeBtn $w={38}><LargeIcon><FormatIcon /></LargeIcon>Format<Caret /></LargeBtn>
            </GroupBody>
            <GroupLabel>Cells</GroupLabel>
          </Group>

          <Group $w={153}>
            <GroupBody>
              <EditList>
                <EditRow><EditIcon><SigmaGlyph>Σ</SigmaGlyph></EditIcon>AutoSum&nbsp;&nbsp;<Caret /></EditRow>
                <EditRow><EditIcon><FillDown /></EditIcon>Fill <Caret /></EditRow>
                <EditRow><EditIcon><Eraser /></EditIcon>Clear <Caret /></EditRow>
              </EditList>
              <LargeBtn $w={36}><LargeIcon><SortFilter /></LargeIcon><LargeText>Sort &amp;<br />Filter <Caret /></LargeText></LargeBtn>
              <LargeBtn $w={40}><LargeIcon><Magnifier /></LargeIcon><LargeText>Find &amp;<br />Select <Caret /></LargeText></LargeBtn>
            </GroupBody>
            <GroupLabel>Editing</GroupLabel>
          </Group>
          <CollapseArea><Chevron /></CollapseArea>
        </Ribbon>

        <FormulaBar>
          <NameBox>E8<Caret /></NameBox>
          <Grip>⋮</Grip>
          <FxBox>
            <FxBtn><XIcon /></FxBtn>
            <FxBtn><Check /></FxBtn>
            <FxBtn>fx</FxBtn>
          </FxBox>
          <FormulaInput>krivera6@dot.gov</FormulaInput>
          <FormulaEnd><Chevron /></FormulaEnd>
        </FormulaBar>

        <Sheet>
          <GridArea>
            <HeaderRow>
              <Corner><CornerMark /></Corner>
              {LETTERS.map((l) => <ColHead key={l} $sel={l === "E"}>{l}</ColHead>)}
            </HeaderRow>
            <Row>
              <RowHead>1</RowHead>
              <Cell $fill $bold $noBorder>id</Cell>
              <Cell $fill $bold $noBorder>first_name</Cell>
              <Cell $fill $bold $noBorder>last_name</Cell>
              <Cell $fill $bold $noBorder>gender</Cell>
              <Cell $fill $bold $noBorder>email</Cell>
              <Cell />
              <Cell $fill $bold $noBorder>Count</Cell>
              {EMPTY.map((i) => <Cell key={i} />)}
            </Row>
            {DATA.map(([first, last, gender, email], i) => {
              const n = i + 2;
              const sel = n === 8;
              const sum = SUMMARY[n];
              return (
                <Row key={n}>
                  <RowHead $sel={sel}>{n}</RowHead>
                  <Cell $right>{i + 1}</Cell>
                  <Cell>{first}</Cell>
                  <Cell>{last}</Cell>
                  <Cell>{gender}</Cell>
                  <Cell>{email}{sel && <Selection><FillHandle /></Selection>}</Cell>
                  <Cell />
                  <Cell>{sum ? sum[0] : ""}</Cell>
                  <Cell $right>{sum ? sum[1] : ""}</Cell>
                  {EMPTY.slice(1).map((c) => <Cell key={c} />)}
                </Row>
              );
            })}
          </GridArea>
          <ScrollRail>
            <ScrollBtn><TinyCaret $c="#777">▲</TinyCaret></ScrollBtn>
            <ScrollThumb />
            <ScrollTrack />
            <ScrollBtn><TinyCaret $c="#777">▼</TinyCaret></ScrollBtn>
          </ScrollRail>
          <QuickAnalysis><QAIcon /></QuickAnalysis>
          <Pointer><Cursor /></Pointer>
        </Sheet>

        <SheetBar>
          <NavArrows><NavArrow>◂</NavArrow><NavArrow>▸</NavArrow></NavArrows>
          <SheetTab>MOCK_DATA</SheetTab>
          <PlusBtn>
            <svg width="13" height="13" viewBox="0 0 13 13" fill="none" stroke="#999"><circle cx="6.500" cy="6.500" r="5.800" /><path d="M3.500 6.500h6M6.500 3.500v6" strokeWidth="1.800" /></svg>
          </PlusBtn>
          <BarGrip>⋮</BarGrip>
          <HScroll>
            <HBtn><TinyCaret $c="#666">◀</TinyCaret></HBtn>
            <HTrack />
            <HThumb />
            <HBtn $w={13} $soft><TinyCaret $c="#666">▶</TinyCaret></HBtn>
          </HScroll>
        </SheetBar>

        <StatusBar>
          Ready
          <StatusRight>
            <ViewBtn $on $w={24}>
              <svg width="11" height="10" viewBox="0 0 11 10" fill="none" stroke="#9a9a9a"><path d="M0 1.500h11M0 4.500h11M0 7.500h11M2 0v10M5.500 0v10M9 0v10" /></svg>
            </ViewBtn>
            <ViewBtn $w={24}>
              <svg width="11" height="10" viewBox="0 0 11 10" fill="none" stroke="#aaa"><rect x="1.500" y=".5" width="8" height="9" /><path d="M0 3h1M10 3h1M3 3h5M3 6h5" /></svg>
            </ViewBtn>
            <ViewBtn $w={22}>
              <svg width="11" height="10" viewBox="0 0 11 10" fill="none" stroke="#aaa"><path d="M.5.5h10v9H.5zM6 .5v5H.5" /></svg>
            </ViewBtn>
            <ZoomSign>-</ZoomSign>
            <ZoomTrack><ZoomThumb /></ZoomTrack>
            <ZoomSign>+</ZoomSign>
            <ZoomPct>100%</ZoomPct>
          </StatusRight>
        </StatusBar>
      </Window>

      <Taskbar>
        <TaskStrip>Address INSTANTLY</TaskStrip>
        <TaskItem><WinLogo /></TaskItem>
        <TaskItem><Cortana /></TaskItem>
        <TaskItem><Explorer /></TaskItem>
        <TaskItem><Calc /></TaskItem>
        <TaskItem><Sublime>S</Sublime></TaskItem>
        <TaskItem><Paper /></TaskItem>
        <TaskItem $open><Chrome /></TaskItem>
        <TaskItem><BoxApp /></TaskItem>
        <TaskItem $open><BlueApp /></TaskItem>
        <TaskItem $open><Steam /></TaskItem>
        <TaskItem $open><SkypeMark>S<SkypeBadge>×</SkypeBadge></SkypeMark></TaskItem>
        <TaskItem $open><SkypeMark>S</SkypeMark></TaskItem>
        <TaskItem $open $active><ExcelMark>X<ExcelLines /></ExcelMark></TaskItem>
        <TaskItem $open><Camtasia c="#56a80e" /></TaskItem>
        <TaskItem $open><Camtasia c="#ef5b45" /></TaskItem>
        <Clock>11:54 AM<br />25/02/2017</Clock>
      </Taskbar>
    </Page>
  );
}
